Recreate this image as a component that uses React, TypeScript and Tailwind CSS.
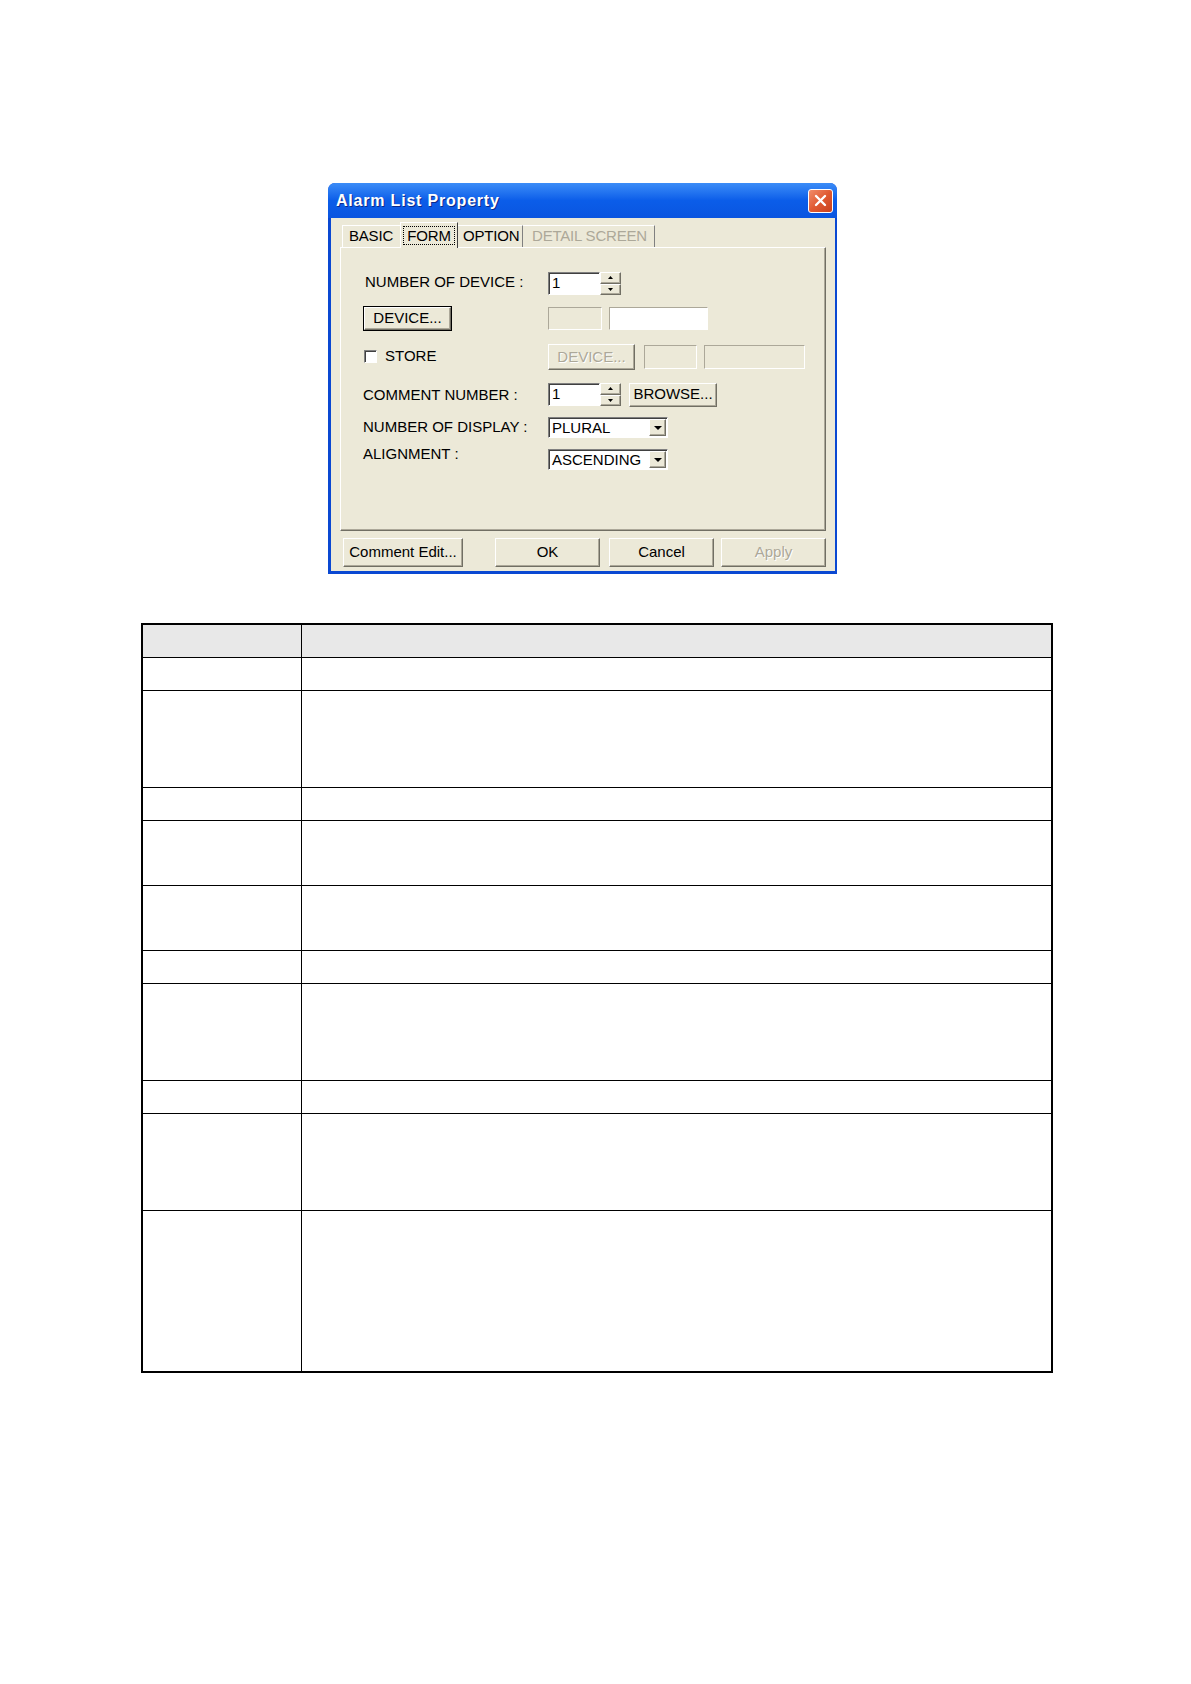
import React from "react";

const raised =
  "border border-t-white border-l-white border-r-[#716f64] border-b-[#716f64] shadow-[inset_-1px_-1px_0_#aca899] bg-[#ece9d8]";
const sunken =
  "border border-t-[#808080] border-l-[#808080] border-r-white border-b-white shadow-[inset_1px_1px_0_#404040]";
const sunkenSoft =
  "border border-t-[#aca899] border-l-[#aca899] border-r-white border-b-white";

const SpinEdit = ({ value }: { value: string }) => (
  <div className="flex h-[23px]">
    <div className={`${sunken} w-[52px] h-full bg-white pl-[3px] text-[15px] leading-[19px] font-light`}>
      {value}
    </div>
    <div className="flex flex-col w-[21px] h-full">
      <div className={`${raised} flex-1 flex items-center justify-center`}>
        <svg width="5" height="3" viewBox="0 0 5 3">
          <path d="M2.5 0 L5 3 L0 3 Z" fill="#000" />
        </svg>
      </div>
      <div className={`${raised} flex-1 flex items-center justify-center`}>
        <svg width="5" height="3" viewBox="0 0 5 3">
          <path d="M0 0 L5 0 L2.5 3 Z" fill="#000" />
        </svg>
      </div>
    </div>
  </div>
);

const Combo = ({ value }: { value: string }) => (
  <div className={`${sunken} w-[120px] h-[21px] bg-white flex items-center`}>
    <span className="pl-[3px] text-[15px] leading-none flex-1">{value}</span>
    <div className={`${raised} w-[17px] h-[17px] mr-[1px] flex items-center justify-center`}>
      <svg width="8" height="4" viewBox="0 0 8 4">
        <path d="M0 0 L8 0 L4 4 Z" fill="#000" />
      </svg>
    </div>
  </div>
);

const Dialog = () => (
  <div className="ml-[328px] w-[509px] h-[391px] flex flex-col rounded-t-[7px] overflow-hidden bg-[#0a48d2] [font-family:'Liberation_Sans',Arial,sans-serif] text-black">
    {/* title bar */}
    <div className="h-[35px] shrink-0 flex items-center pl-[8px] pr-[4px] bg-linear-to-b from-[#3b8cf7] via-[#0b5de9] to-[#0a55e0]">
      <span className="text-white font-bold text-[16px] tracking-[0.8px] [text-shadow:1px_1px_0_#0a2a8a]">
        Alarm List Property
      </span>
      <div className="ml-auto w-[25px] h-[24px] rounded-[3px] border border-white bg-linear-to-br from-[#f08c6a] via-[#e05a32] to-[#c8401e] flex items-center justify-center">
        <svg width="13" height="13" viewBox="0 0 13 13">
          <path d="M2 2 L11 11 M11 2 L2 11" stroke="#fff" strokeWidth="2.4" strokeLinecap="round" />
        </svg>
      </div>
    </div>

    {/* body */}
    <div className="flex-1 px-[3px] pb-[3px] flex">
      <div className="flex-1 bg-[#ece9d8] px-[9px] pt-[4px] flex flex-col">
        {/* tabs */}
        <div className="h-[25px] flex items-end pl-[2px] text-[15px] tracking-[-0.2px]">
          <div className="w-[58px] h-[22px] pl-[6px] flex items-center border-t border-l border-t-white border-l-white">
            BASIC
          </div>
          <div className="relative z-10 w-[58px] h-[26px] -mb-px flex items-center justify-center bg-[#ece9d8] border-t border-l border-t-white border-l-white border-r border-r-[#404040]">
            <span className="border border-dotted border-black px-[3px] leading-[17px]">FORM</span>
          </div>
          <div className="w-[65px] h-[22px] pl-[5px] flex items-center border-t border-t-white border-r border-r-[#808080]">
            OPTION
          </div>
          <div className="w-[132px] h-[22px] pl-[9px] flex items-center text-[#aca899] border-t border-t-white border-r border-r-[#808080]">
            DETAIL SCREEN
          </div>
        </div>

        {/* panel */}
        <div className="h-[284px] shrink-0 border border-t-white border-l-white border-r-[#716f64] border-b-[#716f64] shadow-[inset_-1px_-1px_0_#aca899] pl-[22px] pt-[24px] flex flex-col text-[15px]">
          <div className="flex items-center h-[23px]">
            <div className="w-[185px] pl-[2px] -mt-[3px]">NUMBER OF DEVICE :</div>
            <SpinEdit value="1" />
          </div>

          <div className="flex items-center h-[27px] mt-[10px]">
            <div className="w-[185px]">
              <div className="w-[89px] h-[25px] border border-black">
                <div className={`${raised} w-full h-full flex items-center justify-center`}>DEVICE...</div>
              </div>
            </div>
            <div className={`${sunkenSoft} w-[54px] h-[23px]`} />
            <div className={`${sunkenSoft} w-[99px] h-[23px] ml-[7px] bg-white`} />
          </div>

          <div className="flex items-center h-[26px] mt-[12px]">
            <div className="w-[185px] flex items-center pl-[1px] -mt-[2px]">
              <div className={`${sunken} w-[13px] h-[13px] bg-white`} />
              <span className="ml-[8px]">STORE</span>
            </div>
            <div className={`${raised} w-[87px] h-[26px] flex items-center justify-center text-[#aca899] [text-shadow:1px_1px_0_#fff]`}>
              DEVICE...
            </div>
            <div className={`${sunkenSoft} w-[53px] h-[24px] ml-[9px]`} />
            <div className={`${sunkenSoft} w-[101px] h-[24px] ml-[7px]`} />
          </div>

          <div className="flex items-center h-[25px] mt-[12px]">
            <div className="w-[185px] mt-[1px]">COMMENT NUMBER :</div>
            <SpinEdit value="1" />
            <div className={`${raised} w-[88px] h-[24px] ml-[8px] flex items-center justify-center`}>BROWSE...</div>
          </div>

          <div className="flex items-center h-[21px] mt-[10px]">
            <div className="w-[185px]">NUMBER OF DISPLAY :</div>
            <Combo value="PLURAL" />
          </div>

          <div className="flex items-start h-[21px] mt-[11px]">
            <div className="w-[185px] leading-[17px] -mt-[4px]">ALIGNMENT :</div>
            <Combo value="ASCENDING" />
          </div>
        </div>

        {/* buttons */}
        <div className="flex mt-[7px] pl-[3px] text-[15px]">
          <div className={`${raised} w-[120px] h-[29px] flex items-center justify-center`}>Comment Edit...</div>
          <div className={`${raised} w-[105px] h-[29px] ml-[32px] flex items-center justify-center`}>OK</div>
          <div className={`${raised} w-[105px] h-[29px] ml-[9px] flex items-center justify-center`}>Cancel</div>
          <div className={`${raised} w-[105px] h-[29px] ml-[7px] flex items-center justify-center text-[#aca899] [text-shadow:1px_1px_0_#fff]`}>
            Apply
          </div>
        </div>
      </div>
    </div>
  </div>
);

const rowHeights = ["h-[33px]", "h-[97px]", "h-[33px]", "h-[65px]", "h-[65px]", "h-[33px]", "h-[97px]", "h-[33px]", "h-[97px]", "h-[160px]"];

const PropertyTable = () => (
  <div className="ml-[141px] mt-[49px] w-[912px] border-2 border-black">
    <div className="h-[33px] flex border-b border-black bg-[#e8e8e8]">
      <div className="w-[159px] border-r border-black" />
      <div className="flex-1" />
    </div>
    {rowHeights.map((h, i) => (
      <div key={i} className={`${h} flex ${i < rowHeights.length - 1 ? "border-b border-black" : ""}`}>
        <div className="w-[159px] border-r border-black" />
        <div className="flex-1" />
      </div>
    ))}
  </div>
);

export default function App() {
  return (
    <div className="w-[1191px] h-[1684px] bg-white pt-[183px] overflow-hidden">
      <Dialog />
      <PropertyTable />
    </div>
  );
}
